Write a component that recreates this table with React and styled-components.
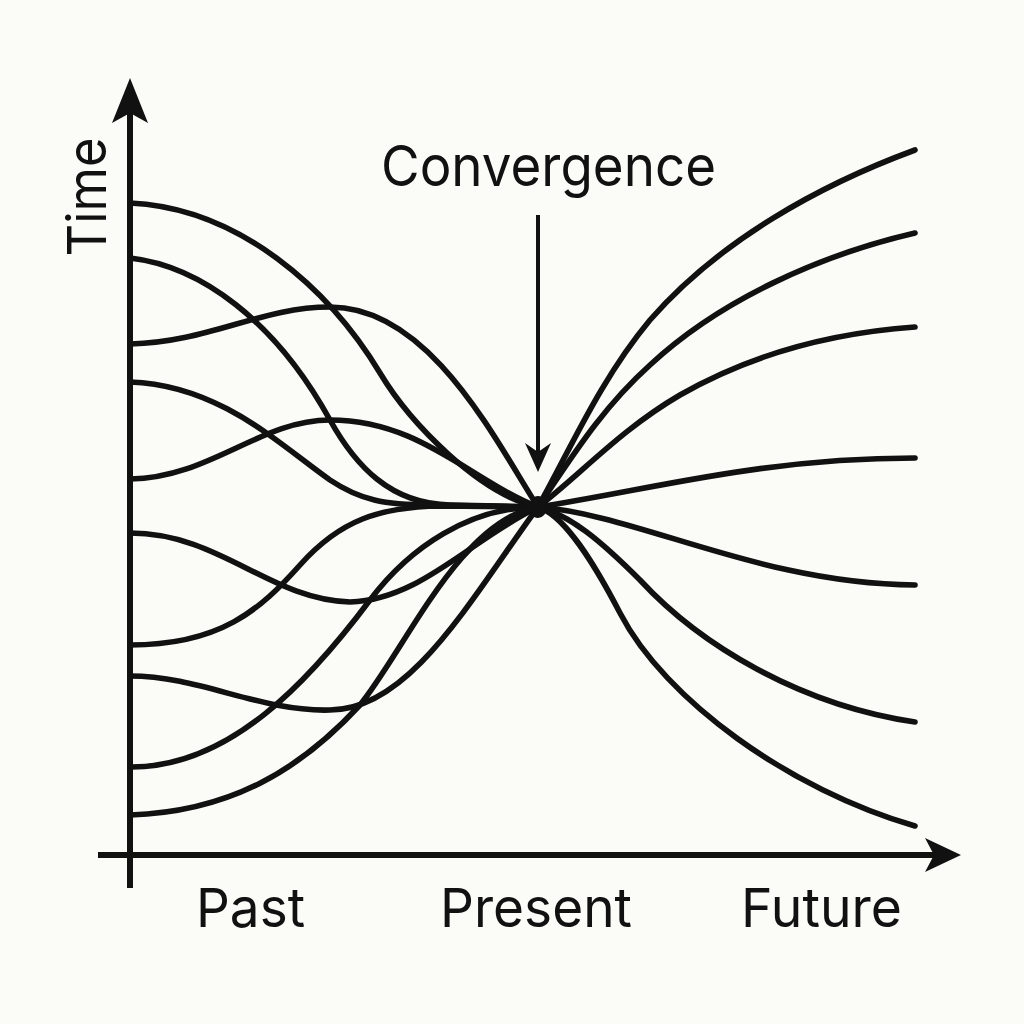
import React from 'react'
import styled, { createGlobalStyle } from 'styled-components'

const GlobalStyle = createGlobalStyle`
  html, body {
    margin: 0;
    padding: 0;
    background: #fbfbf8;
  }
`

const Page = styled.main`
  width: 1024px;
  height: 1024px;
  background: #fbfbf8;
  display: flex;
  align-items: center;
  justify-content: center;
`

const Chart = styled.svg`
  display: block;
  width: 1024px;
  height: 1024px;
`

const Curve = styled.path`
  fill: none;
  stroke: #111;
  stroke-width: 5.6;
  stroke-linecap: round;
  stroke-linejoin: round;
`

const Axis = styled.line`
  stroke: #111;
  stroke-width: ${p => p.$w || 6};
`

const Head = styled.polygon`
  fill: #111;
`

const Dot = styled.ellipse`
  fill: #111;
`

const Label = styled.text`
  font-family: Inter, "Liberation Sans", sans-serif;
  font-size: ${p => p.$size || 54}px;
  fill: #111;
`

// past trajectories, each ending at the convergence point
const past = [
  'M130,203 C240,208 330,290 380,373 C410,423 480,495 538,507',
  'M130,258 C200,266 275,320 330,420 C355,465 390,504 450,505 L538,507',
  'M130,344 C210,342 260,307 330,307 C430,307 495,440 538,507',
  'M130,382 C220,385 280,445 330,480 C360,500 385,505 430,505 L538,507',
  'M130,479 C210,478 260,420 330,420 C420,420 470,480 538,507',
  'M130,533 C220,533 270,600 350,602 C420,600 470,540 538,507',
  'M130,645 C220,645 260,610 300,565 C340,520 380,507 440,506 L538,507',
  'M130,676 C200,676 260,712 330,710 C410,710 470,600 538,507',
  'M130,767 C230,768 310,680 370,600 C410,547 470,507 538,507',
  'M130,815 C230,812 300,770 360,705 C405,650 460,520 538,507',
]

// future trajectories, fanning out from the convergence point
const future = [
  'M538,507 C570,450 600,380 650,320 C720,240 820,185 915,150',
  'M538,507 C570,460 600,410 650,365 C720,300 820,255 915,233',
  'M538,507 C580,475 620,430 680,395 C750,355 830,333 915,327',
  'M538,507 C650,490 760,458 915,458',
  'M538,507 C640,515 760,584 915,585',
  'M538,507 C570,515 600,540 640,580 C700,645 800,705 915,722',
  'M538,507 C565,515 595,565 620,613 C665,700 790,790 915,826',
]

const App = () => {
  return (
    <Page>
      <GlobalStyle />
      <Chart viewBox="0 0 1024 1024">
        {past.map((d, i) => <Curve key={'p' + i} d={d} />)}
        {future.map((d, i) => <Curve key={'f' + i} d={d} />)}

        <Axis x1="130" y1="110" x2="130" y2="888" />
        <Head points="130,78 148,123 130,113 112,123" />
        <Axis x1="98" y1="855" x2="940" y2="855" />
        <Head points="961,855 925,838 934,855 925,872" />

        <Axis x1="538" y1="215" x2="538" y2="455" $w={4} />
        <Head points="538,472 525,443 538,452 551,443" />
        <Dot cx="538" cy="507" rx="9" ry="11" />

        <Label x="381" y="186" $size={56} textLength="335" lengthAdjust="spacingAndGlyphs">Convergence</Label>
        <Label x="106" y="197" textAnchor="middle" transform="rotate(-90 106 197)" textLength="119" lengthAdjust="spacingAndGlyphs">Time</Label>
        <Label x="196" y="927" textLength="109" lengthAdjust="spacingAndGlyphs">Past</Label>
        <Label x="440" y="927" textLength="192" lengthAdjust="spacingAndGlyphs">Present</Label>
        <Label x="741" y="927" textLength="161" lengthAdjust="spacingAndGlyphs">Future</Label>
      </Chart>
    </Page>
  )
}

export default App
